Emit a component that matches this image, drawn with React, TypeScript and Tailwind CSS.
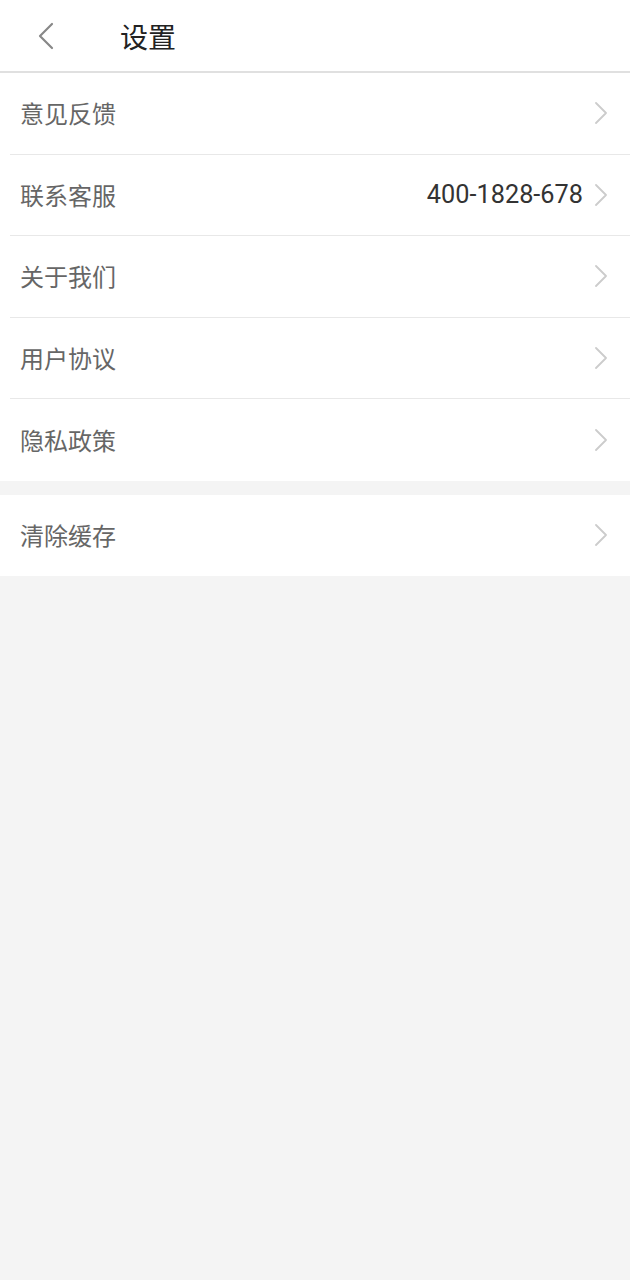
const font = { fontFamily: '"Noto Sans CJK SC", "Noto Sans", sans-serif' };

type Item = { label: string; value?: string };

const mainItems: Item[] = [
  { label: "意见反馈" },
  { label: "联系客服", value: "400-1828-678" },
  { label: "关于我们" },
  { label: "用户协议" },
  { label: "隐私政策" },
];

function Chevron() {
  return (
    <svg width="14" height="22" viewBox="0 0 14 22" fill="none" className="shrink-0">
      <path d="M2 1l10 10L2 21" stroke="#cccccc" strokeWidth="1.8" strokeLinecap="round" strokeLinejoin="round" />
    </svg>
  );
}

function Row({ item, divider }: { item: Item; divider: boolean }) {
  return (
    <div className="pl-[10px]">
      <div
        className={`flex h-[81.5px] items-center pl-[10px] pr-[22px] ${
          divider ? "border-b border-[#e8e8e8]" : ""
        }`}
      >
        <span className="flex-1 text-[24px] text-[#666666]">{item.label}</span>
        {item.value && (
          <span className="mr-[11px] text-[25.3px] text-[#333333]" style={{ fontFamily: "Roboto, sans-serif" }}>
            {item.value}
          </span>
        )}
        <Chevron />
      </div>
    </div>
  );
}

export default function App() {
  return (
    <div className="min-h-[1280px] bg-[#f4f4f4]" style={font}>
      <header className="flex h-[73px] items-center border-b-2 border-[#e0e0e0] bg-white">
        <div className="flex w-[120px] items-center pl-[37px]">
          <svg width="18" height="28" viewBox="0 0 18 28" fill="none">
            <path d="M15 2L3 14l12 12" stroke="#888888" strokeWidth="2.2" strokeLinecap="round" strokeLinejoin="round" />
          </svg>
        </div>
        <h1 className="text-[28px] text-[#222222]">设置</h1>
      </header>

      <div className="bg-white">
        {mainItems.map((item, i) => (
          <Row key={item.label} item={item} divider={i < mainItems.length - 1} />
        ))}
      </div>

      <div className="mt-[14px] bg-white">
        <Row item={{ label: "清除缓存" }} divider={false} />
      </div>
    </div>
  );
}
